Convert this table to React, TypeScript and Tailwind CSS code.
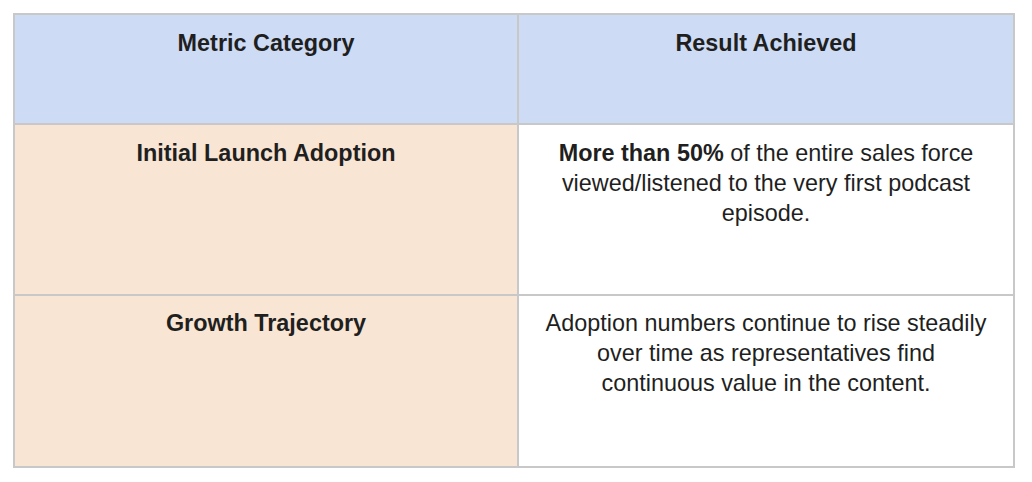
const rows = [
  {
    metric: 'Initial Launch Adoption',
    result: (
      <>
        <span className="font-bold">More than 50%</span> of the entire sales force viewed/listened to the very first podcast episode.
      </>
    ),
    height: 'h-[171px] border-b-2',
    pad: 'pt-[13px]',
  },
  {
    metric: 'Growth Trajectory',
    result: <>Adoption numbers continue to rise steadily over time as representatives find continuous value in the content.</>,
    height: 'h-[170px]',
    pad: 'pt-[12px]',
  },
];

export default function App() {
  return (
    <div className="min-h-screen bg-white p-[13px] font-['Liberation_Sans',Arial,sans-serif] text-[23.4px] leading-[30px] text-[#1f1f1f]">
      <div className="grid w-[1002px] grid-cols-[504px_494px] border-2 border-[#c8c8c8]">
        <div className="h-[110px] border-b-2 border-r-2 border-[#c8c8c8] bg-[#cddbf4] px-6 pt-[13px] text-center font-bold">
          Metric Category
        </div>
        <div className="h-[110px] border-b-2 border-[#c8c8c8] bg-[#cddbf4] px-6 pt-[13px] text-center font-bold">
          Result Achieved
        </div>
        {rows.map((row) => (
          <div key={row.metric} className="contents">
            <div className={`${row.height} ${row.pad} border-r-2 border-[#c8c8c8] bg-[#f8e5d3] px-6 text-center font-bold`}>
              {row.metric}
            </div>
            <div className={`${row.height} ${row.pad} border-[#c8c8c8] bg-white px-6 text-center`}>
              {row.result}
            </div>
          </div>
        ))}
      </div>
    </div>
  );
}
